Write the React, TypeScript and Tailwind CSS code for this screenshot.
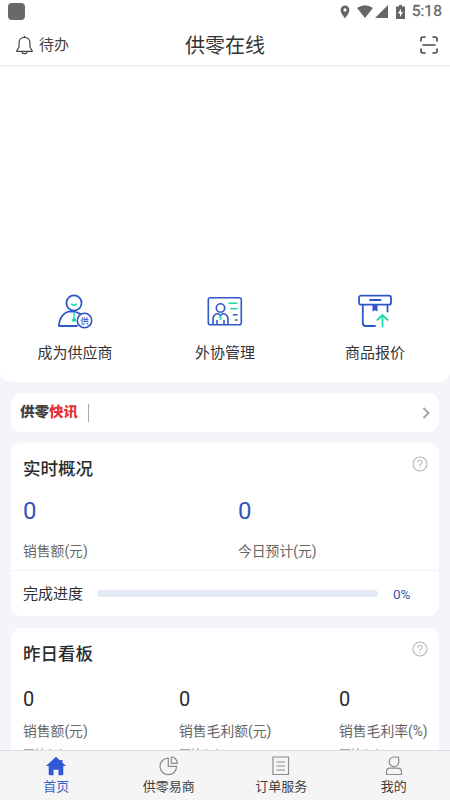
import React from "react";

interface Metric {
  label: string;
  value: string;
}

const yesterdayMetrics: Metric[] = [
  { label: "销售额(元)", value: "0" },
  { label: "销售毛利额(元)", value: "0" },
  { label: "销售毛利率(%)", value: "0" },
];

const StatusBar = () => (
  <div className="h-[23px] flex items-center justify-between pl-2 pr-2 shrink-0 text-[#666]">
    <div className="w-[17px] h-[17px] rounded-[4px] bg-[#696969]" />
    <div className="flex items-center h-full">
      <svg className="w-[10px] h-[14px]" viewBox="0 0 10 14" fill="currentColor">
        <path
          fillRule="evenodd"
          d="M5 .5A4.4 4.4 0 0 0 .6 4.9C.6 8.2 5 13.3 5 13.3s4.4-5.1 4.4-8.4A4.4 4.4 0 0 0 5 .5Zm0 2.8a1.6 1.6 0 1 1 0 3.2 1.6 1.6 0 0 1 0-3.2Z"
        />
      </svg>
      <svg className="w-4 h-[13px] ml-[7px]" viewBox="0 0 16 13" fill="currentColor">
        <path d="M0 3Q8-2.5 16 3L8 13Z" />
      </svg>
      <svg className="w-[13px] h-[13px] ml-[2px]" viewBox="0 0 13 13" fill="currentColor">
        <path d="M13 0V13H0Z" />
      </svg>
      <svg className="w-[9px] h-[14px] ml-[8px]" viewBox="0 0 9 14" fill="currentColor">
        <path
          fillRule="evenodd"
          d="M3 0h3v1.4h3V14H0V1.4h3ZM5 3.5 2 8.500h2V12l3-5H5Z"
        />
      </svg>
      <span className="ml-[7px] text-[15.500px] leading-[23px] tracking-[0.1px] [-webkit-text-stroke:0.3px_#666]">
        5:18
      </span>
    </div>
  </div>
);

const Header = () => (
  <header className="h-11 grid grid-cols-3 items-center px-[16px] border-b-2 border-[#f1f1f2] shrink-0 text-[#444]">
    <div className="flex items-center gap-[6px] pt-px">
      <svg
        className="w-[17px] h-[20px]"
        viewBox="0 0 17 20"
        fill="none"
        stroke="currentColor"
        strokeWidth="1.2"
        strokeLinecap="round"
        strokeLinejoin="round"
      >
        <path d="M8.5 2.3C5.3 2.3 3 4.7 3 7.8v4.4L.8 15.7v.7h15.4v-.7L14 12.2V7.8C14 4.7 11.7 2.3 8.5 2.3ZM8.5 2.3V1M6 17.5c.5 1.6 4.5 1.6 5 0" />
      </svg>
      <span className="text-[15px] leading-5 pt-px">待办</span>
    </div>
    <h1 className="text-[20px] leading-7 pt-1 text-center text-[#333]">供零在线</h1>
    <svg
      className="w-[18px] h-[18px] justify-self-end mr-[-4px] mt-px"
      viewBox="0 0 18 18"
      fill="none"
      stroke="currentColor"
      strokeWidth="1.6"
      strokeLinecap="round"
    >
      <path d="M1 5V3Q1 1 3 1h2M13 1h2q2 0 2 2v2M17 13v2q0 2-2 2h-2M5 17H3q-2 0-2-2v-2M3 9h12" />
    </svg>
  </header>
);

const SupplierIcon = () => (
  <svg className="w-9 h-9" viewBox="0 0 36 36" fill="none" stroke="#3057c8" strokeWidth="1.8" strokeLinecap="round" strokeLinejoin="round">
    <circle cx="17" cy="9" r="7.6" />
    <path d="M20 32H2C2 24 7 17.5 14 17.3c4 0 6.5.7 9 2.4" />
    <path d="M14.5 10.2q2.500 2 5 0" stroke="#20d9b0" strokeWidth="1.5" />
    <path d="M17 19v8" stroke="#20d9b0" strokeWidth="1.5" />
    <circle cx="17" cy="26" r="1.2" fill="#20d9b0" stroke="#20d9b0" />
    <circle cx="27.5" cy="26.500" r="7.2" fill="#fff" strokeWidth="1.6" />
    <text x="27.5" y="29.500" textAnchor="middle" fontSize="8.500" fontWeight="500" fill="#3057c8" stroke="none">
      供
    </text>
  </svg>
);

const ManageIcon = () => (
  <svg className="w-9 h-9" viewBox="0 0 36 36" fill="none" stroke="#3057c8" strokeWidth="1.6" strokeLinecap="round" strokeLinejoin="round">
    <rect x="1.300" y="3.700" width="33" height="27" rx="2" />
    <circle cx="13.5" cy="14" r="4.200" />
    <path d="M6 30v-4.5c0-3 2-5.5 5-6l2.5 2 2.5-2c3 .5 5 3 5 6V30M10 30v-3.5M17 30v-3.5" />
    <path d="M13.5 22.5v2.500" stroke="#20d9b0" strokeWidth="2" />
    <path d="M22 9.200h8M24 14.700h6" stroke="#20d9b0" />
    <path d="M26.500 20.700h3.500M28.500 26h1.500" />
  </svg>
);

const QuoteIcon = () => (
  <svg className="w-9 h-9" viewBox="0 0 36 36" fill="none" stroke="#3057c8" strokeWidth="1.8" strokeLinecap="round" strokeLinejoin="round">
    <rect x="2" y="1.700" width="32" height="9" rx="2" />
    <path d="M13 6h10.500M5.800 11v18q0 3 3 3H18M30.500 11v6.500" />
    <path d="M15.500 11h5v6.500l-2.500-1.200-2.500 1.200Z" fill="#3057c8" stroke="none" />
    <path d="M25.500 32.500V21.500M20.300 26l5.200-5 5.200 5" stroke="#20d9b0" />
  </svg>
);

const shortcuts = [
  { label: "成为供应商", icon: <SupplierIcon /> },
  { label: "外协管理", icon: <ManageIcon /> },
  { label: "商品报价", icon: <QuoteIcon /> },
];

const HelpIcon = () => (
  <svg className="w-4 h-4" viewBox="0 0 16 16" fill="none" stroke="#b5b5b5" strokeWidth="1.1" strokeLinecap="round">
    <circle cx="8" cy="8" r="7" />
    <path d="M5.900 6.300c0-2.700 4.200-2.700 4.200 0 0 1.500-2.100 1.600-2.100 3.300M8 11.500v.2" />
  </svg>
);

const CardTitle: React.FC<{ title: string }> = ({ title }) => (
  <div className="flex justify-between">
    <h2 className="text-[17.500px] leading-[26px] font-medium text-[#2b2b2b]">{title}</h2>
    <HelpIcon />
  </div>
);

const Overview = () => (
  <section className="mt-[11px] h-[173px] bg-white rounded-[11px] shrink-0">
    <div className="h-[128px] border-b border-[#f2f3f5] pl-3 pr-[11px] pt-[13px]">
      <CardTitle title="实时概况" />
      <div className="grid grid-cols-[215px_1fr] mt-[13px]">
        {["销售额(元)", "今日预计(元)"].map((label) => (
          <div key={label}>
            <div className="text-[24px] leading-[32px] text-[#3355bb]">0</div>
            <div className="text-[13.800px] leading-5 mt-[14px] text-[#666]">{label}</div>
          </div>
        ))}
      </div>
    </div>
    <div className="h-[45px] flex items-center pl-3">
      <span className="text-[15px] leading-5 pt-px text-[#2f2f2f]">完成进度</span>
      <div className="w-[281px] h-[7px] ml-[14px] rounded-full bg-[#e4eaf5]" />
      <span className="ml-[15px] text-[13.500px] leading-5 pt-px text-[#3355aa]">0%</span>
    </div>
  </section>
);

const Yesterday = () => (
  <section className="mt-3 h-[220px] bg-white rounded-[11px] shrink-0 pl-3 pr-[11px] pt-[13px]">
    <CardTitle title="昨日看板" />
    <div className="grid grid-cols-[156px_160px_1fr] mt-[18px]">
      {yesterdayMetrics.map((metric) => (
        <div key={metric.label} className="whitespace-nowrap">
          <div className="text-[20px] leading-[28px] text-[#2b2b2b]">{metric.value}</div>
          <div className="text-[13.800px] leading-5 mt-[8px] text-[#666]">{metric.label}</div>
          <div className="text-[12px] leading-4 mt-[6px] text-[#999]">同比(%)</div>
        </div>
      ))}
    </div>
  </section>
);

const tabs = [
  {
    label: "首页",
    icon: (
      <path d="M10 .7 0 10h2.700v8q0 1.200 1.200 1.200h3.600v-5.500h5v5.500h3.600q1.200 0 1.200-1.200v-8H20l-3.500-3.300V4H14v.4Z" fill="#3158d4" />
    ),
  },
  {
    label: "供零易商",
    icon: (
      <g stroke="#8b8b8b" strokeWidth="1.2" strokeLinejoin="round">
        <path d="M9.300 2.100a8.300 8.300 0 1 0 8.300 8.300H9.300Z" />
        <path d="M12.300 1v6.400h6A6.300 6.300 0 0 0 12.300 1Z" />
      </g>
    ),
  },
  {
    label: "订单服务",
    icon: (
      <g stroke="#8b8b8b" strokeWidth="1.2">
        <path d="M2 1h15.500v17.500H2ZM5.500 6h8.500M5.500 10h8.500M5.500 14h8.500" />
      </g>
    ),
  },
  {
    label: "我的",
    icon: (
      <g stroke="#8b8b8b" strokeWidth="1.2" strokeLinejoin="round">
        <path d="M14.500 1H10a4.800 4.800 0 1 0 4.800 4.800ZM2.500 18.500v-2.800q0-3.500 3.500-3.500h8q3.500 0 3.500 3.500v2.800Z" />
      </g>
    ),
  },
];

const TabBar = () => (
  <nav className="h-[50px] shrink-0 grid grid-cols-4 bg-[#f5f5f6] border-t border-[#dcdde0]">
    {tabs.map((tab, index) => (
      <div key={tab.label} className="flex flex-col items-center pt-[5px]">
        <svg className="w-5 h-5" viewBox="0 0 20 20" fill="none">
          {tab.icon}
        </svg>
        <span className={`text-[13px] leading-[22px] ${index === 0 ? "text-[#3b5fc4]" : "text-[#3f3f3f]"}`}>
          {tab.label}
        </span>
      </div>
    ))}
  </nav>
);

const App: React.FC = () => {
  return (
    <div className="w-[450px] h-[800px] flex flex-col overflow-hidden bg-[#f4f5fa] font-[Roboto,'Noto_Sans_CJK_SC',sans-serif]">
      <div className="h-[382px] shrink-0 bg-white rounded-b-[11px] flex flex-col">
        <StatusBar />
        <Header />
        <div className="mt-auto grid grid-cols-3 pb-[19px]">
          {shortcuts.map((item) => (
            <div key={item.label} className="flex flex-col items-center gap-[13px]">
              {item.icon}
              <span className="text-[15px] leading-5 text-[#333]">{item.label}</span>
            </div>
          ))}
        </div>
      </div>

      <main className="flex-1 min-h-0 overflow-hidden flex flex-col px-[11px] pt-[11px]">
        <div className="h-[39px] shrink-0 bg-white rounded-[11px] flex items-center pl-[9px] pr-[9px]">
          <span className="text-[14.500px] leading-5 pt-px font-black text-[#3f3f3f] -skew-x-3">
            供零<span className="text-[#e5343c]">快讯</span>
          </span>
          <div className="w-px h-[18px] ml-[10px] bg-[#aaa]" />
          <svg className="w-2 h-3 ml-auto" viewBox="0 0 8 12" fill="none" stroke="#a5a5a5" strokeWidth="2">
            <path d="m1.500 1 5 5-5 5" />
          </svg>
        </div>
        <Overview />
        <Yesterday />
      </main>

      <TabBar />
    </div>
  );
};

export default App;
